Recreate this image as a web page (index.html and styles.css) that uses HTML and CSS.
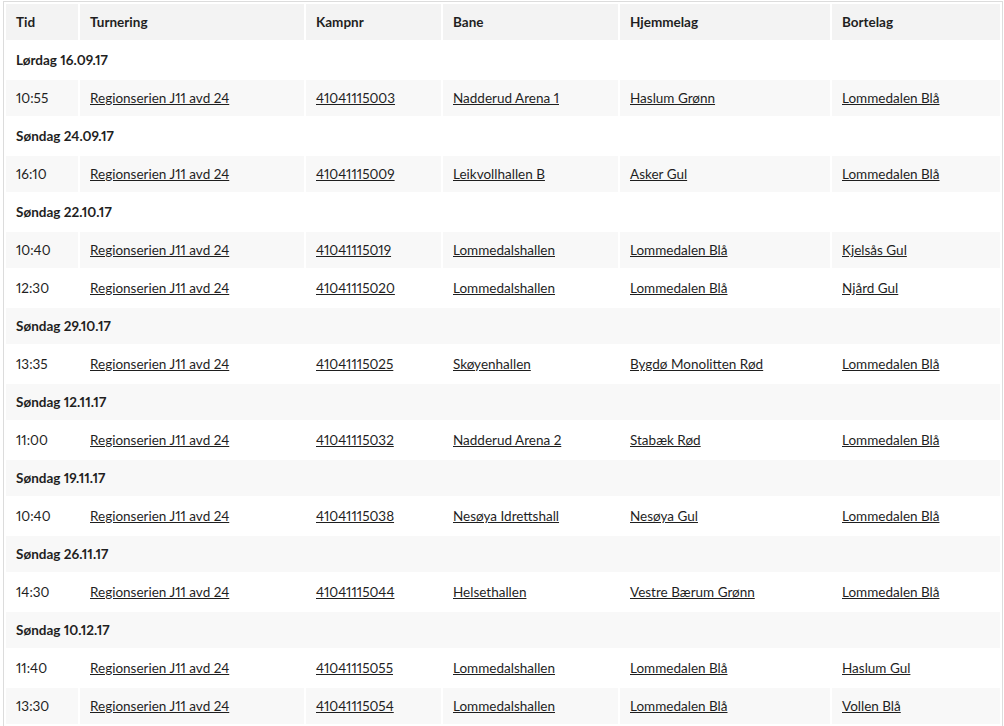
FILE: index.html
```html
<!DOCTYPE html>
<html lang="no">
<head>
<meta charset="utf-8">
<title>Kamper</title>
<link rel="stylesheet" href="styles.css">
</head>
<body>
<div class="wrap">
<table class="matches">
<colgroup>
<col class="c-tid"><col class="c-turn"><col class="c-kamp"><col class="c-bane"><col class="c-hjem"><col class="c-borte">
</colgroup>
<thead>
<tr><th>Tid</th><th>Turnering</th><th>Kampnr</th><th>Bane</th><th>Hjemmelag</th><th>Bortelag</th></tr>
</thead>
<tbody>
<tr class="day"><td colspan="6">Lørdag 16.09.17</td></tr>
<tr><td>10:55</td><td><a href="#">Regionserien J11 avd 24</a></td><td><a href="#">41041115003</a></td><td><a href="#">Nadderud Arena 1</a></td><td><a href="#">Haslum Grønn</a></td><td><a href="#">Lommedalen Blå</a></td></tr>
<tr class="day"><td colspan="6">Søndag 24.09.17</td></tr>
<tr><td>16:10</td><td><a href="#">Regionserien J11 avd 24</a></td><td><a href="#">41041115009</a></td><td><a href="#">Leikvollhallen B</a></td><td><a href="#">Asker Gul</a></td><td><a href="#">Lommedalen Blå</a></td></tr>
<tr class="day"><td colspan="6">Søndag 22.10.17</td></tr>
<tr><td>10:40</td><td><a href="#">Regionserien J11 avd 24</a></td><td><a href="#">41041115019</a></td><td><a href="#">Lommedalshallen</a></td><td><a href="#">Lommedalen Blå</a></td><td><a href="#">Kjelsås Gul</a></td></tr>
<tr><td>12:30</td><td><a href="#">Regionserien J11 avd 24</a></td><td><a href="#">41041115020</a></td><td><a href="#">Lommedalshallen</a></td><td><a href="#">Lommedalen Blå</a></td><td><a href="#">Njård Gul</a></td></tr>
<tr class="day"><td colspan="6">Søndag 29.10.17</td></tr>
<tr><td>13:35</td><td><a href="#">Regionserien J11 avd 24</a></td><td><a href="#">41041115025</a></td><td><a href="#">Skøyenhallen</a></td><td><a href="#">Bygdø Monolitten Rød</a></td><td><a href="#">Lommedalen Blå</a></td></tr>
<tr class="day"><td colspan="6">Søndag 12.11.17</td></tr>
<tr><td>11:00</td><td><a href="#">Regionserien J11 avd 24</a></td><td><a href="#">41041115032</a></td><td><a href="#">Nadderud Arena 2</a></td><td><a href="#">Stabæk Rød</a></td><td><a href="#">Lommedalen Blå</a></td></tr>
<tr class="day"><td colspan="6">Søndag 19.11.17</td></tr>
<tr><td>10:40</td><td><a href="#">Regionserien J11 avd 24</a></td><td><a href="#">41041115038</a></td><td><a href="#">Nesøya Idrettshall</a></td><td><a href="#">Nesøya Gul</a></td><td><a href="#">Lommedalen Blå</a></td></tr>
<tr class="day"><td colspan="6">Søndag 26.11.17</td></tr>
<tr><td>14:30</td><td><a href="#">Regionserien J11 avd 24</a></td><td><a href="#">41041115044</a></td><td><a href="#">Helsethallen</a></td><td><a href="#">Vestre Bærum Grønn</a></td><td><a href="#">Lommedalen Blå</a></td></tr>
<tr class="day"><td colspan="6">Søndag 10.12.17</td></tr>
<tr><td>11:40</td><td><a href="#">Regionserien J11 avd 24</a></td><td><a href="#">41041115055</a></td><td><a href="#">Lommedalshallen</a></td><td><a href="#">Lommedalen Blå</a></td><td><a href="#">Haslum Gul</a></td></tr>
<tr><td>13:30</td><td><a href="#">Regionserien J11 avd 24</a></td><td><a href="#">41041115054</a></td><td><a href="#">Lommedalshallen</a></td><td><a href="#">Lommedalen Blå</a></td><td><a href="#">Vollen Blå</a></td></tr>
</tbody>
</table>
</div>
</body>
</html>
```
FILE: styles.css
```css
html, body {
  margin: 0;
  padding: 0;
  background: #fff;
}
body {
  font-family: Lato, "Liberation Sans", sans-serif;
  font-size: 13.5px;
  color: #1f1f1f;
  font-variant-numeric: proportional-nums;
}
.wrap {
  margin: 1px 1px 0 3px;
  border: 1px solid #dcdcdc;
  width: 998px;
}
.matches {
  width: 998px;
  table-layout: fixed;
  border-collapse: separate;
  border-spacing: 2px;
}
.c-tid { width: 72px; }
.c-turn { width: 224px; }
.c-kamp { width: 135px; }
.c-bane { width: 175px; }
.c-hjem { width: 210px; }
.c-borte { width: 168px; }
.matches th,
.matches td {
  height: 36px;
  padding: 0 10px;
  box-sizing: border-box;
  text-align: left;
  vertical-align: middle;
  white-space: nowrap;
}
.matches th {
  background: #f3f3f3;
  font-weight: 700;
}
.matches tbody tr:nth-child(even) td {
  background: #f8f8f8;
}
.matches tr.day td {
  font-weight: 700;
}
.matches a {
  color: #1f1f1f;
  text-decoration: underline;
}
```
